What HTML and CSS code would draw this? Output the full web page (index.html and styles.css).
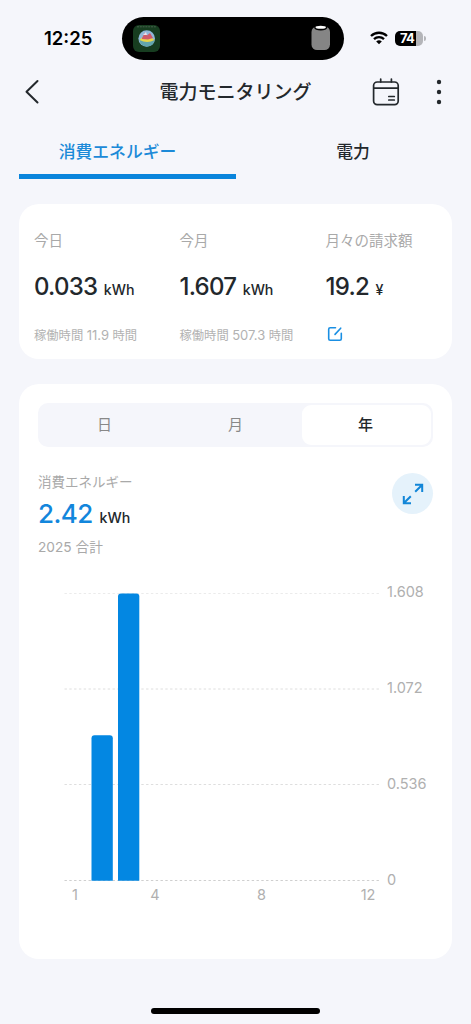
FILE: index.html
```html
<!DOCTYPE html>
<html lang="ja">
<head>
<meta charset="utf-8">
<meta name="viewport" content="width=device-width, initial-scale=1">
<title>電力モニタリング</title>
<link rel="stylesheet" href="styles.css">
</head>
<body>
<div class="status">
  <span class="clock">12:25</span>
  <div class="island">
    <svg class="island-app" width="27" height="27" viewBox="0 0 27 27">
      <rect width="27" height="27" rx="6" fill="#173d20"/>
      <path d="M4 1.800h19" stroke="#48624d" stroke-width="1" stroke-dasharray="2 .8"/>
      <circle cx="13.700" cy="13.500" r="8.300" fill="#8fb7d8"/>
      <path d="M6.500 15q7-2 15 0-1 6.500-7.500 6.500T6.500 15z" fill="#62a5ad"/>
      <path d="M6.500 15l3-3 4 1 4-1 4 3q-7 4-15 0z" fill="#e8d64a"/>
      <path d="M9 13l3-5.500 2 3 3-2.500 3 5-5 1.500-6-.5z" fill="#cf5a68"/>
      <path d="M10 10l3-3 1 3z" fill="#e9dfe9"/>
    </svg>
    <svg class="island-pod" width="20" height="26" viewBox="0 0 20 26">
      <rect x=".5" y="1.500" width="18.500" height="23.500" rx="5.500" fill="#858585"/>
      <ellipse cx="9.700" cy="2.800" rx="6.500" ry="2.800" fill="#000"/>
      <ellipse cx="9.700" cy="2.300" rx="5.200" ry="1.500" fill="#fff"/>
    </svg>
  </div>
  <svg class="wifi" width="18" height="14" viewBox="0 0 18 14" fill="none" stroke="#000" stroke-width="2.300">
    <path d="M1 5a11.500 11.500 0 0 1 16 0"/>
    <path d="M4 8.200a7.200 7.200 0 0 1 10 0"/>
    <path d="M9 13.300L6.200 10.500a4 4 0 0 1 5.600 0z" fill="#000" stroke="none"/>
  </svg>
  <div class="battery"><span class="battery-level">74</span></div>
  <i class="battery-cap"></i>
</div>

<header class="header">
  <svg class="back" width="16" height="26" viewBox="0 0 16 26" fill="none" stroke="#23282c" stroke-width="2" stroke-linecap="round" stroke-linejoin="round"><path d="M13.500 2L2.500 12.700l11 10.800"/></svg>
  <h1 class="title">電力モニタリング</h1>
  <svg class="calendar" width="28" height="28" viewBox="0 0 28 28" fill="none" stroke="#23282c" stroke-width="1.700" stroke-linecap="round">
    <rect x="1.600" y="4" width="24.600" height="22.600" rx="3.600"/>
    <path d="M2 10.200h24M8.700 1v3M19.400 1v3M16.800 18.500h5.500M16.800 22h5.500"/>
  </svg>
  <svg class="more" width="6" height="26" viewBox="0 0 6 26" fill="#23282c"><circle cx="3" cy="3" r="2.200"/><circle cx="3" cy="13" r="2.200"/><circle cx="3" cy="23" r="2.200"/></svg>
</header>

<nav class="tabs">
  <div class="tab tab-active">消費エネルギー</div>
  <div class="tab tab-power">電力</div>
</nav>

<section class="card summary">
  <div class="stat">
    <div class="label">今日</div>
    <div class="value">0.033<span class="unit">kWh</span></div>
    <div class="note">稼働時間 <span class="hours">11.9</span> 時間</div>
  </div>
  <div class="stat">
    <div class="label">今月</div>
    <div class="value">1.607<span class="unit">kWh</span></div>
    <div class="note">稼働時間 <span class="hours">507.3</span> 時間</div>
  </div>
  <div class="stat">
    <div class="label">月々の請求額</div>
    <div class="value">19.2<span class="unit yen">¥</span></div>
    <svg class="edit" width="16" height="16" viewBox="0 0 16 16" fill="none" stroke="#1a8fe3" stroke-width="1.600" stroke-linecap="round" stroke-linejoin="round"><path d="M8.500 1.800H3.200Q1.700 1.800 1.700 3.300v9.500q0 1.500 1.500 1.500h9.600q1.500 0 1.500-1.500V7.300M8 8.400l5.700-6.200"/></svg>
  </div>
</section>

<section class="card usage">
  <div class="segments">
    <div class="segment segment-day">日</div>
    <div class="segment segment-month">月</div>
    <div class="segment segment-active">年</div>
  </div>
  <div class="total">
    <div>
      <div class="total-label">消費エネルギー</div>
      <div class="total-value">2.42<span class="unit total-unit">kWh</span></div>
      <div class="total-note">2025 合計</div>
    </div>
    <div class="expand">
      <svg width="22" height="22" viewBox="0 0 22 22" fill="none" stroke="#1286d8" stroke-width="2"><path d="M13 1.800h7.200V9M19.800 2.200l-6.600 6.600M9 20.200H1.800V13M2.200 19.800l6.600-6.600"/></svg>
    </div>
  </div>
  <svg class="chart" width="410" height="330" viewBox="0 0 410 330">
    <g class="gridlines">
      <path class="faint" d="M26.500 13.500H341"/>
      <path d="M26.500 109H341"/>
      <path d="M26.500 204.500H341"/>
      <path class="base" d="M26.500 300.500H341"/>
    </g>
    <g class="bars">
      <path d="M53.500 300.700V158.300q0-3 3-3h15.300q3 0 3 3v142.400z"/>
      <path d="M80 300.700V16.500q0-3 3-3h15.300q3 0 3 3v284.200z"/>
    </g>
    <g class="axis">
      <text x="349" y="17.200">1.608</text>
      <text x="349" y="113">1.072</text>
      <text x="349" y="208.800">0.536</text>
      <text x="349" y="304.500">0</text>
      <g text-anchor="middle">
        <text x="37" y="319.700">1</text>
        <text x="117" y="319.700">4</text>
        <text x="223.500" y="319.700">8</text>
        <text x="330" y="319.700">12</text>
      </g>
    </g>
  </svg>
</section>
<div class="home"></div>
</body>
</html>
```
FILE: styles.css
```css
* { box-sizing: border-box; }
body {
  margin: 0;
  width: 471px;
  height: 1024px;
  overflow: hidden;
  display: flex;
  flex-direction: column;
  background: #f5f6fb;
  color: #23282c;
  font-family: Inter, "Noto Sans CJK JP", sans-serif;
}
svg { display: block; flex: none; }

.status {
  display: flex;
  align-items: center;
  height: 44px;
  margin-top: 16px;
  padding-left: 44px;
}
.clock { width: 78px; font-size: 18.5px; font-weight: 600; color: #000; line-height: 44px; }
.island {
  display: flex;
  align-items: center;
  justify-content: space-between;
  width: 222px;
  height: 43px;
  padding: 0 13px 0 11px;
  border-radius: 22px;
  background: #000;
}
.wifi { margin: 0 7px 0 26px; }
.battery {
  width: 28px;
  height: 15px;
  border-radius: 5px;
  overflow: hidden;
  background: linear-gradient(90deg, #000 21px, #b4b5b9 21px);
}
.battery-level {
  display: block;
  padding-left: 5px;
  color: #fff;
  font-size: 13px;
  line-height: 15px;
  font-weight: 700;
  letter-spacing: -0.7px;
}
.battery-cap { width: 2px; height: 5px; margin-left: 1px; border-radius: 0 2px 2px 0; background: #b4b5b9; }

.header { display: flex; align-items: center; height: 62px; padding: 1px 0 0 24px; }
.title {
  width: 231px;
  margin: 3px 0 0 80px;
  text-align: center;
  font-size: 19px;
  line-height: 28px;
  font-weight: 500;
}
.calendar { margin: 1px 0 0 21px; }
.more { margin: 1px 0 0 35.5px; }

.tabs { display: grid; grid-template-columns: 217px 1fr; height: 57px; margin: 0 19px; }
.tab {
  padding-top: 16px;
  text-align: center;
  font-size: 16.8px;
  line-height: 28px;
  font-weight: 500;
  border-bottom: 5px solid transparent;
}
.tab-power { padding-left: 18px; }
.tab-active { padding-right: 20px; color: #1c8ad8; border-color: #0a85dc; }

.card { margin: 0 19px; border-radius: 20px; background: #fff; }
.summary {
  display: grid;
  grid-template-columns: 145.5px 146px 1fr;
  height: 155px;
  margin-top: 25px;
  padding: 27px 0 0 15px;
}
.label { font-size: 14.5px; line-height: 20px; color: #a9a9a9; }
.value {
  margin-top: 19px;
  font-size: 24px;
  line-height: 34px;
  font-weight: 500;
  letter-spacing: -0.75px;
  white-space: nowrap;
}
.unit { margin-left: 6.5px; font-size: 14.2px; font-weight: 500; letter-spacing: 0; }
.note { margin-top: 18px; font-size: 12.3px; line-height: 20px; color: #b2b2b2; white-space: nowrap; }
.hours { font-size: 13px; }
.edit { margin: 19px 0 0 1px; }

.usage { height: 575px; margin-top: 25px; padding: 19px 0 0 19px; }
.segments {
  display: grid;
  grid-template-columns: 132px 130px 1fr;
  width: 395px;
  height: 44px;
  padding: 2px;
  border-radius: 10px;
  background: #f5f6fb;
}
.segment { text-align: center; font-size: 15px; line-height: 40px; color: #888; }
.segment-day { padding-right: 3px; }
.segment-month { padding-right: 3px; }
.segment-active { border-radius: 9px; background: #fff; color: #23282c; font-weight: 500; padding-right: 2px; }

.total { display: flex; justify-content: space-between; width: 395px; height: 88px; margin-top: 25px; }
.total-label { font-size: 13.5px; line-height: 20px; color: #a9a9a9; }
.total-value { margin-top: 6px; font-size: 26px; line-height: 32px; font-weight: 500; letter-spacing: -0.6px; color: #1286dc; }
.total-unit { margin-left: 7px; }
.total-unit { color: #23282c; }
.total-note { margin-top: 3px; font-size: 13.7px; line-height: 20px; color: #a9a9a9; }
.expand {
  display: flex;
  align-items: center;
  justify-content: center;
  width: 41px;
  height: 41px;
  margin-top: 1px;
  border-radius: 50%;
  background: #e5f2fb;
}

.chart { margin-top: 20px; }
.gridlines path { fill: none; stroke: #dedede; stroke-width: 1; stroke-dasharray: 2.4 2.4; }
.gridlines .faint { stroke: #ebebeb; }
.gridlines .base { stroke: #cfcfcf; }
.bars path { fill: #0387e2; }
.axis text { font-size: 14.5px; fill: #b0b0b0; }

.home { width: 169px; height: 6px; margin: 49px 0 0 151px; border-radius: 3px; background: #000; }
```
